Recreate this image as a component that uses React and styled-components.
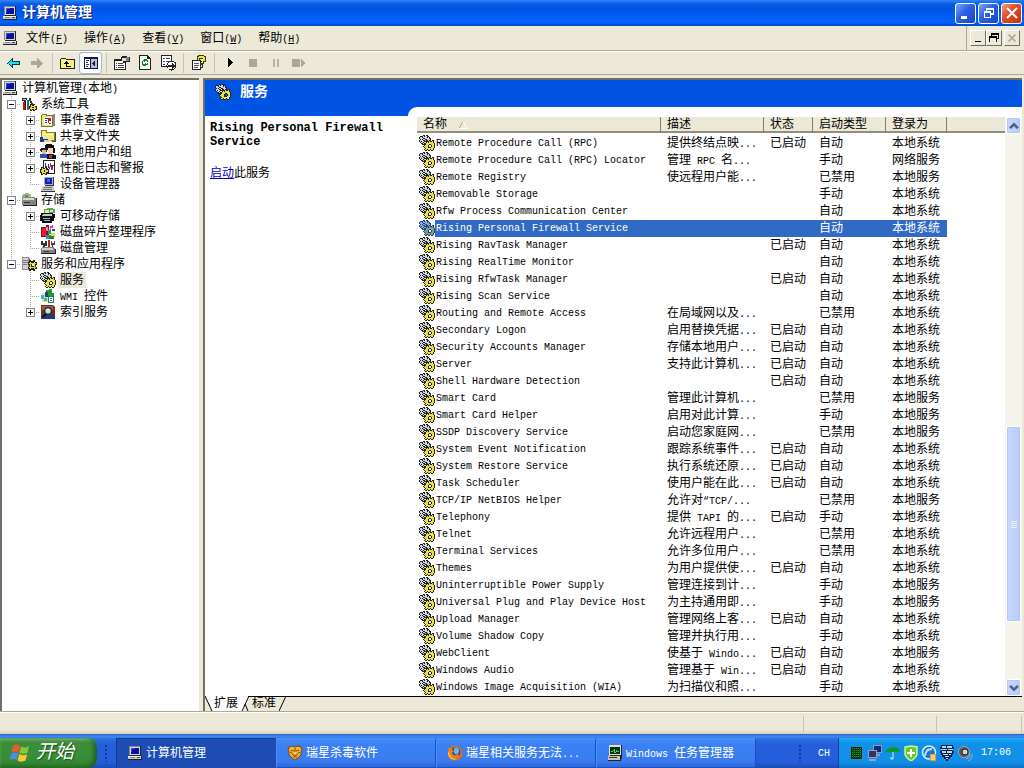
import React, { useState } from 'react';
import styled, { createGlobalStyle, css } from 'styled-components';

const AUTO = '自动';
const MANUAL = '手动';
const DISABLED = '已禁用';
const STARTED = '已启动';
const SYSTEM = '本地系统';
const LOCAL = '本地服务';
const NETWORK = '网络服务';

// name, description, status, startup type, log on as
const services = [
  ['Remote Procedure Call (RPC)', '提供终结点映...', STARTED, AUTO, SYSTEM],
  ['Remote Procedure Call (RPC) Locator', '管理 RPC 名...', '', MANUAL, NETWORK],
  ['Remote Registry', '使远程用户能...', '', DISABLED, LOCAL],
  ['Removable Storage', '', '', MANUAL, SYSTEM],
  ['Rfw Process Communication Center', '', '', AUTO, SYSTEM],
  ['Rising Personal Firewall Service', '', '', AUTO, SYSTEM],
  ['Rising RavTask Manager', '', STARTED, AUTO, SYSTEM],
  ['Rising RealTime Monitor', '', '', AUTO, SYSTEM],
  ['Rising RfwTask Manager', '', STARTED, AUTO, SYSTEM],
  ['Rising Scan Service', '', '', AUTO, SYSTEM],
  ['Routing and Remote Access', '在局域网以及...', '', DISABLED, SYSTEM],
  ['Secondary Logon', '启用替换凭据...', STARTED, AUTO, SYSTEM],
  ['Security Accounts Manager', '存储本地用户...', STARTED, AUTO, SYSTEM],
  ['Server', '支持此计算机...', STARTED, AUTO, SYSTEM],
  ['Shell Hardware Detection', '', STARTED, AUTO, SYSTEM],
  ['Smart Card', '管理此计算机...', '', DISABLED, LOCAL],
  ['Smart Card Helper', '启用对此计算...', '', MANUAL, LOCAL],
  ['SSDP Discovery Service', '启动您家庭网...', '', DISABLED, LOCAL],
  ['System Event Notification', '跟踪系统事件...', STARTED, AUTO, SYSTEM],
  ['System Restore Service', '执行系统还原...', STARTED, AUTO, SYSTEM],
  ['Task Scheduler', '使用户能在此...', STARTED, AUTO, SYSTEM],
  ['TCP/IP NetBIOS Helper', '允许对“TCP/...', '', DISABLED, LOCAL],
  ['Telephony', '提供 TAPI 的...', STARTED, MANUAL, SYSTEM],
  ['Telnet', '允许远程用户...', '', DISABLED, SYSTEM],
  ['Terminal Services', '允许多位用户...', '', DISABLED, SYSTEM],
  ['Themes', '为用户提供使...', STARTED, AUTO, SYSTEM],
  ['Uninterruptible Power Supply', '管理连接到计...', '', MANUAL, LOCAL],
  ['Universal Plug and Play Device Host', '为主持通用即...', '', MANUAL, LOCAL],
  ['Upload Manager', '管理网络上客...', STARTED, AUTO, SYSTEM],
  ['Volume Shadow Copy', '管理并执行用...', '', MANUAL, SYSTEM],
  ['WebClient', '使基于 Windo...', STARTED, AUTO, LOCAL],
  ['Windows Audio', '管理基于 Win...', STARTED, AUTO, SYSTEM],
  ['Windows Image Acquisition (WIA)', '为扫描仪和照...', '', MANUAL, SYSTEM],
];

// Latin runs are set smaller so that they take half the width of a Chinese character
function Txt({ children }) {
  return children
    .split(/([^\u2E80-\uFFEF]+)/)
    .filter(Boolean)
    .map((part, i) => (/[\u2E80-\uFFEF]/.test(part) ? part : <Latin key={i}>{part}</Latin>));
}

/* ---------- icons ---------- */

function Icon({ children, size = 16, crisp = true }) {
  return (
    <IconSvg width={size} height={size} viewBox="0 0 16 16" shapeRendering={crisp ? 'crispEdges' : 'auto'} aria-hidden="true">
      {children}
    </IconSvg>
  );
}

const gearPixels = [
  '....KK.KK.......',
  '.KKKWKWWKK......',
  'KWWKWWWWKWK.....',
  'KWWWKKWWWWKK....',
  '.KWKWWKKWWWK....',
  'KWWWKKWKKWKK.KK.',
  'KWKWWKKKKKYKKYK.',
  '.KWWKWWKYKYYYYK.',
  '..KKWKKYYYYYYYYK',
  '...KKKKYYYKKYYYK',
  '.....KYYYK..KYYK',
  '....KYYYYK..KYYK',
  '.....KYYYKKKYYYK',
  '......KYYYYYYYK.',
  '.....KYYKYYKYYK.',
  '......KK.KK.KK..',
];

// one path per colour letter of the pixel map
const pixelPath = (rows, letter) => rows
  .flatMap((row, y) => [...row].map((c, x) => (c === letter ? `M${x} ${y}h1v1h-1z` : '')))
  .join('');

const gearPaths = ['K', 'W', 'Y'].map((letter) => pixelPath(gearPixels, letter));

function Gears({ dim }) {
  const colors = dim ? ['#20447c', '#8cacdc', '#7c9c84'] : ['#24241c', '#ccd6e4', '#ece044'];
  return (
    <Icon>
      {gearPaths.map((d, i) => <path key={i} d={d} fill={colors[i]} />)}
    </Icon>
  );
}

function Computer() {
  return (
    <Icon>
      <path d="M2 1h11v9H2z" fill="#d8d8d0" />
      <path d="M2 1h11v1H2zM2 1h1v9H2z" fill="#888" />
      <path d="M13 1h1v10H3v-1h10z" fill="#222" />
      <path d="M4 3h8v6H4z" fill="#0810a8" />
      <path d="M4 3h4v1H4zM4 4h1v3H4z" fill="#3050e8" />
      <path d="M1 11h13v3H1z" fill="#c8c8c0" />
      <path d="M1 11h13v1H1z" fill="#f4f4f0" />
      <path d="M14 11h1v4H1v-1h13z" fill="#222" />
      <path d="M3 12h5v1H3z" fill="#888" />
      <path d="M10 12h3v1h-3z" fill="#444" />
    </Icon>
  );
}

function Tools() {
  return (
    <Icon>
      <path d="M1 2h5v2H5v2H3V5H1z" fill="#222" />
      <path d="M2 3h3v1H2z" fill="#dcdcdc" />
      <path d="M2 6h3v8H2z" fill="#c01818" />
      <path d="M4 6h1v8H4z" fill="#600" />
      <path d="M6 4h2v10H6z" fill="#1c7a70" />
      <path d="M8 2h2v3h1v2h1v2h1v2h-2V9h-1V7H9V5H8z" fill="#333" />
      <path d="M9 8h2v1h1V8h2v2h2v4h-2v1h-2v-1h-1v1H9v-2H8v-3h1z" fill="#222" />
      <path d="M10 9h1v1h2V9h1v2h1v2h-1v1h-1v-1h-2v1h-1v-1H9v-2h1z" fill="#e8d830" />
      <path d="M11 11h2v1h-2z" fill="#222" />
    </Icon>
  );
}

function EventLog() {
  return (
    <Icon>
      <path d="M1 3h1V2h5v1h6v12H1z" fill="#7c7428" />
      <path d="M2 3h4v1h6v10H2z" fill="#f2e66c" />
      <path d="M13 2h2v12h-2z" fill="#888" />
      <path d="M4 5h8v8H4z" fill="#fff" />
      <path d="M5 6h3v1H5zM5 8h2v1H5zM5 10h2v1H5z" fill="#2030b0" />
      <path d="M8 6h3v3H9v2H8zM9 11h2v1H9z" fill="#b02020" />
    </Icon>
  );
}

function SharedFolder() {
  return (
    <Icon>
      <path d="M1 2h6v2h8v9H1z" fill="#8a8020" />
      <path d="M2 3h4v2h8v7H2z" fill="#f4ea78" />
      <path d="M2 6h11v1H2z" fill="#fffbc8" />
      <path d="M0 9h3v2h5v1h3v2H0z" fill="#1838a8" />
      <path d="M4 12h7v2H4z" fill="#e8c8a8" />
      <path d="M15 4h1v10h-4v-1h3z" fill="#444" />
    </Icon>
  );
}

function Users() {
  return (
    <Icon>
      <path d="M6 0h6v1h2v3h1v5h-2V4H9v2H6V4H5V1h1z" fill="#111" />
      <path d="M8 4h5v5h-1v1H9V9H8z" fill="#f4d4c0" />
      <path d="M1 4h5v1h1v3H1V7H0V5h1z" fill="#222" />
      <path d="M2 6h4v4H2z" fill="#e8b898" />
      <path d="M0 10h7v4H0z" fill="#2850b8" />
      <path d="M7 10h7v1h2v4H7z" fill="#111" />
      <path d="M9 11h3v3H9z" fill="#c83030" />
    </Icon>
  );
}

function PerfLog() {
  return (
    <Icon>
      <path d="M3 0h12v14H3z" fill="#222" />
      <path d="M4 1h10v12H4z" fill="#fff" />
      <path d="M5 3h1v3h1v2h1V4h1v3h1V3h1v4h1V5h2v1h-1v3h-2V6h-1v3H9V8H8v2H6V7H5z" fill="#2030c0" />
      <path d="M10 3h1v2h1v3h1v2h-2V7h-1z" fill="#d02020" />
      <path d="M1 7h2v1h2V7h2v2h2v4H7v2H5v-1H3v1H1v-2H0V9h1z" fill="#222" />
      <path d="M2 8h1v1h2V8h1v2h2v2H6v2H5v-1H3v1H2v-2H1v-2h1z" fill="#e8dc30" />
      <path d="M4 10h1v2H4z" fill="#222" />
    </Icon>
  );
}

function DeviceManager() {
  return (
    <Icon>
      <path d="M4 1h9v8H4z" fill="#b0b0b8" />
      <path d="M5 2h7v6H5z" fill="#1020b8" />
      <path d="M7 3h3v3H7z" fill="#4060f0" />
      <path d="M13 1h1v9H5V9h8z" fill="#333" />
      <path d="M3 10h10v1h1v2h1v2H1v-2h1v-2h1z" fill="#c8c8d0" />
      <path d="M4 11h8v1H4zM3 13h9v1H3z" fill="#70707c" />
      <path d="M1 15h14v1H1z" fill="#333" />
    </Icon>
  );
}

function Storage() {
  return (
    <Icon>
      <path d="M2 2h2V1h4v1h2v4H1V3h1z" fill="#88c880" />
      <path d="M4 3h3v2H4z" fill="#c05858" />
      <path d="M1 5h12l2 2v6H1z" fill="#888" />
      <path d="M2 6h11v2H2z" fill="#d8d8d8" />
      <path d="M15 6h1v8H2v-1h13z" fill="#222" />
      <path d="M3 10h6v1H3z" fill="#333" />
      <path d="M11 10h2v1h-2z" fill="#20a020" />
    </Icon>
  );
}

function Removable() {
  return (
    <Icon>
      <path d="M4 1h3V0h6v1h2v4H4z" fill="#50a858" />
      <path d="M5 2h4v3H5z" fill="#e8e8a0" />
      <path d="M10 2h3v2h-3z" fill="#d0e8d0" />
      <path d="M1 5h12v1h2v4h-1v3h-2v2H2v-2H0V7h1z" fill="#111" />
      <path d="M3 6h9v2H2V7h1z" fill="#c8c8c8" />
      <path d="M3 10h7v1H3zM4 12h6v1H4z" fill="#90b8c8" />
    </Icon>
  );
}

function Defrag() {
  return (
    <Icon>
      <path d="M1 3h5V1h3v13H6v-1H1z" fill="#901020" />
      <path d="M2 4h4v8H2z" fill="#e02030" />
      <path d="M6 3h2v4H6z" fill="#f090a0" />
      <path d="M10 2h2V1h1v3h-2v2h-1z" fill="#c040c0" />
      <path d="M12 5h3v2h-3z" fill="#3040e0" />
      <path d="M8 6h3v4H8z" fill="#20a838" />
      <path d="M11 9h4v4h-4z" fill="#e8d828" />
      <path d="M6 11h5v4H6z" fill="#2090d0" />
      <path d="M9 12h5v3H9z" fill="#208030" />
    </Icon>
  );
}

function DiskManage() {
  return (
    <Icon>
      <path d="M1 1h2v2h2V1h2v5H5v2H3V5H1z" fill="#333" />
      <path d="M8 0h2v7H8z" fill="#b02828" />
      <path d="M11 1h1v2h2V1h1v4h-2v3h-1V5h-1z" fill="#444" />
      <path d="M2 7h12l1 2v4H1V9z" fill="#808080" />
      <path d="M2 8h11v2H2z" fill="#d0d0d0" />
      <path d="M1 13h14v1H1zM15 9h1v5h-1z" fill="#222" />
      <path d="M4 11h5v1H4z" fill="#444" />
    </Icon>
  );
}

function ServicesApps() {
  return (
    <Icon>
      <path d="M1 1h6l2 1v12H1z" fill="#909090" />
      <path d="M2 2h5v11H2z" fill="#d0d0d0" />
      <path d="M2 4h5v1H2zM2 6h5v1H2zM2 8h4v1H2z" fill="#777" />
      <path d="M8 4h2v1h2V4h2v2h2v3h-1v2h1v2h-2v2h-2v-1h-2v1H8v-2H7v-2h1V9H7V6h1z" fill="#222" />
      <path d="M9 6h1v1h3V6h1v1h1v1h-1v3h1v1h-1v1h-1v-1h-3v1H9v-1H8v-1h1V8H8V7h1z" fill="#e6da30" />
      <path d="M10 8h3v3h-3z" fill="#222" />
      <path d="M11 8h2v2h-2z" fill="#fff" />
    </Icon>
  );
}

function Wmi() {
  return (
    <Icon>
      <path d="M2 5h6v9H2z" fill="#f0e860" />
      <path d="M6 2h3V1h3v4h2v3H8V6H6z" fill="#209838" />
      <path d="M1 7h3v3h3v3H4v-2H1z" fill="#28b8d8" />
      <path d="M5 4h3v5H5z" fill="#2038b8" />
      <path d="M8 8h6v7H8z" fill="#207868" />
      <path d="M9 9h4v5H9z" fill="#f8f8f8" />
      <path d="M10 10h2v1h-2zM10 12h2v1h-2z" fill="#207868" />
    </Icon>
  );
}

function Indexing() {
  return (
    <Icon crisp={false}>
      <path d="M1 1h12l2 2v11H1z" fill="#703020" />
      <path d="M2 2h11v4H2z" fill="#a85838" />
      <path d="M1 12h14v3H1z" fill="#1838a0" />
      <circle cx="8" cy="7" r="3.4" fill="#a8e4ec" stroke="#222" strokeWidth="1.2" />
      <path d="M6 10 2.5 13" stroke="#111" strokeWidth="2" />
      <path d="M7 6h2" stroke="#fff" />
    </Icon>
  );
}

function Shield() {
  return (
    <Icon crisp={false}>
      <path d="M2 2l3-1 3 1 3-1 3 1 1 3-1 2v3l-3 3-3 2-3-2-3-3V7L1 5z" fill="#f0b030" stroke="#7a4408" />
      <path d="M4 5l3 1M12 5L9 6M5 9l3 2 3-2M6 12h4M8 3v4M3 7l2 1M13 7l-2 1" stroke="#8a4c00" fill="none" />
      <path d="M5 4h1M10 4h1M7 8h2" stroke="#fff4a0" />
    </Icon>
  );
}

function Firefox() {
  return (
    <Icon crisp={false}>
      <circle cx="8" cy="8" r="7.500" fill="#e86c10" />
      <circle cx="8.500" cy="7" r="5" fill="#26489c" />
      <path d="M7 3c3-2 6 1 5 4s-4 3-5 1z" fill="#68b4e4" />
      <path d="M1 2l2 2 3-1-1 2 2 1-2 2c1 3 4 3 6 1l1 2c-3 3-8 2-9-1z" fill="#f08018" />
      <path d="M2 6c0 5 3 8 8 8-4 2-9-1-9-6z" fill="#fcc838" />
    </Icon>
  );
}

function TaskManager() {
  return (
    <Icon>
      <path d="M2 0h12v11H2z" fill="#e4e0d0" />
      <path d="M14 0h1v11H3v-1h11z" fill="#222" />
      <path d="M3 2h10v7H3z" fill="#063010" />
      <path d="M4 6h2V5h1V4h1v3h1V5h1v1h2v1H9v1H7V6H6v1H4z" fill="#30e050" />
      <path d="M1 11h12v4H1z" fill="#c8c4b4" />
      <path d="M2 12h8v1H2z" fill="#333" />
      <path d="M13 11h2v3h-1v2H1v-1h12z" fill="#222" />
    </Icon>
  );
}

function WindowsFlag() {
  return (
    <IconSvg width="20" height="20" viewBox="0 0 20 20" aria-hidden="true">
      <path d="M3 3c2-2 5-2 7 0L8.500 9.500c-2-1.500-5-1.500-7 0z" fill="#f0582c" />
      <path d="M11 3.500c2 1.500 5 1.500 8-.5L17.500 9.500c-3 1.500-6 1.500-8 .3z" fill="#8cc63c" />
      <path d="M1.200 10.700c2-1.500 5-1.500 7 0L6.500 17c-2-1.500-5-1.500-7 0z" fill="#4a8ef0" />
      <path d="M9.200 11c2 1.500 5 1.500 8 .2L15.500 17.500c-3 1.500-6 1.500-8 0z" fill="#fcc830" />
    </IconSvg>
  );
}

const toolbar = [
  { label: '后退', icon: <><path d="M1 8h1V7h1V6h1V5h1V4h1V3h1v3h7v4H7v3H6v-1H5v-1H4v-1H3V9H1z" fill="#003c50" /><path d="M2 8h1V7h1V6h1V5h1v2h7v2H6v2H5v-1H4V9H2z" fill="#20e0e8" /></> },
  { label: '前进', off: true, icon: <path d="M2 6h6V3l1 1 5 4-5 5H8v-3H2z" fill="#aca899" /> },
  null,
  { label: '上一级', icon: <><path d="M1 3h5v1h9v10H0V4h1z" fill="#222" /><path d="M1 4h5v1h8v8H1z" fill="#f8f080" /><path d="M6 6h1v1h1v1h1v1H7v2h4v1H6V9H4V8h1V7h1z" fill="#000" /></> },
  { label: '显示/隐藏控制台树', pressed: true, icon: <><path d="M1 2h14v12H1z" fill="#101840" /><path d="M2 4h5v9H2zM8 4h6v9H8z" fill="#fff" /><path d="M8 4h6v9H8z" fill="#b8bcd0" /><path d="M3 5h3v1H3zM3 7h2v1H3zM3 9h3v1H3zM3 11h2v1H3z" fill="#203080" /><path d="M12 6v5h-1v-1h-1V9H9V8h1V7h1V6z" fill="#101840" /></> },
  null,
  { label: '属性', icon: <><path d="M0 4h12v11H0z" fill="#222" /><path d="M1 6h10v8H1z" fill="#fff" /><path d="M2 8h1v1H2zM4 8h5v1H4zM2 10h1v1H2zM4 10h6v1H4zM2 12h1v1H2zM4 12h6v1H4z" fill="#444" /><path d="M8 1h5v1h3v5h-4v1H9V6H6V4h1V2h1z" fill="#222" /><path d="M8 3h4v3H8z" fill="#e8dcc8" /><path d="M12 2h3v4h-3z" fill="#7880b8" /></> },
  { label: '刷新', icon: <><path d="M2 0h9v1h1v1h1v1h1v12H2z" fill="#222" /><path d="M3 1h7v3h3v10H3z" fill="#fff" /><path d="M8 3v1h2v1h1v2h-1V6H8v1H7V6H6V5h1V4h1zM5 6h1v2H5z" fill="#108020" /><path d="M8 12v-1H6v-1H5V8h1v1h2V8h1v1h1v1H9v1H8zM11 8h-1v2h1z" fill="#108020" /></> },
  { label: '导出列表', icon: <><path d="M1 0h11v12H1z" fill="#222" /><path d="M2 1h9v10H2z" fill="#fff" /><path d="M3 3h2v1H3zM6 3h4v1H6zM3 6h2v1H3zM6 6h3v1H6zM3 9h2v1H3z" fill="#304070" /><circle cx="11.500" cy="10.500" r="4.500" fill="#fff" stroke="#222" /><path d="M8 10h4V8l3 3-3 3v-2H8z" fill="#222" /></> },
  null,
  { label: '帮助', icon: <><path d="M1 5h9v10H1z" fill="#222" /><path d="M2 6h7v8H2z" fill="#fff" /><path d="M3 8h5v1H3zM3 10h5v1H3zM3 12h4v1H3z" fill="#555" /><path d="M6 1h1V0h6v1h2v6h-2v2h-1v4H9V8h1V6h2V4H9v2H6z" fill="#333" /><path d="M7 2h1V1h5v1h1v4h-2v2h-2V7h1V5h1V3H8v2H7zM10 10h1v2h-1z" fill="#f8e820" /></> },
  null,
  { label: '启动服务', icon: <path d="M6 3h1v1h1v1h1v1h1v1h1v1h-1v1H9v1H8v1H7v1H6z" fill="#000" /> },
  { label: '停止服务', off: true, icon: <path d="M4 4h8v8H4z" fill="#aca899" /> },
  { label: '暂停服务', off: true, icon: <path d="M5 4h2v8H5zM9 4h2v8H9z" fill="#b8b4a4" /> },
  { label: '重新启动服务', off: true, icon: <path d="M1 4h8v8H1zM10 4l5 4-5 4z" fill="#aca899" /> },
];

const menus = [['文件', 'F'], ['操作', 'A'], ['查看', 'V'], ['窗口', 'W'], ['帮助', 'H']];

// guides: 'line' keeps a parent line running, 'tee' and 'end' are branches of the node itself
const tree = [
  { icon: <Computer />, text: '计算机管理(本地)', guides: [] },
  { icon: <Tools />, text: '系统工具', guides: ['tee'], open: true },
  { icon: <EventLog />, text: '事件查看器', guides: ['line', 'tee'], open: false },
  { icon: <SharedFolder />, text: '共享文件夹', guides: ['line', 'tee'], open: false },
  { icon: <Users />, text: '本地用户和组', guides: ['line', 'tee'], open: false },
  { icon: <PerfLog />, text: '性能日志和警报', guides: ['line', 'tee'], open: false },
  { icon: <DeviceManager />, text: '设备管理器', guides: ['line', 'end'] },
  { icon: <Storage />, text: '存储', guides: ['tee'], open: true },
  { icon: <Removable />, text: '可移动存储', guides: ['line', 'tee'], open: false },
  { icon: <Defrag />, text: '磁盘碎片整理程序', guides: ['line', 'tee'] },
  { icon: <DiskManage />, text: '磁盘管理', guides: ['line', 'end'] },
  { icon: <ServicesApps />, text: '服务和应用程序', guides: ['end'], open: true },
  { icon: <Gears />, text: '服务', guides: ['none', 'tee'], active: true },
  { icon: <Wmi />, text: 'WMI 控件', guides: ['none', 'tee'] },
  { icon: <Indexing />, text: '索引服务', guides: ['none', 'end'], open: false },
];

const tasks = [
  { icon: <Computer />, text: '计算机管理', active: true },
  { icon: <Shield />, text: '瑞星杀毒软件' },
  { icon: <Firefox />, text: '瑞星相关服务无法...' },
  { icon: <TaskManager />, text: 'Windows 任务管理器' },
];

function Tray() {
  return (
    <TrayBar>
      <Icon>
        <path d="M2 2h11v12H2z" fill="#042808" />
        <path d="M3 3h9v1H3zM3 5h9v1H3zM3 7h9v1H3zM3 9h9v1H3zM3 11h9v1H3z" fill="#189820" />
        <path d="M4 3h1v10H4zM6 3h1v10H6zM8 3h1v10H8zM10 3h1v10h-1z" fill="#085010" />
      </Icon>
      <Icon>
        <path d="M6 0h9v8H6zM8 9h5v2H8z" fill="#9098bc" />
        <path d="M7 1h7v6H7z" fill="#182878" />
        <path d="M1 5h9v8H1zM2 14h7v2H2z" fill="#9ca0c0" />
        <path d="M2 6h7v6H2z" fill="#303468" />
      </Icon>
      <Icon crisp={false}>
        <path d="M0 8c1-4 4-5 8-6 4 0 7 2 8 6-1-2-3-2-4 0-1-2-3-2-4 0-1-2-3-2-4 0-1-2-3-1-4 0z" fill="#0c9828" />
        <path d="M8 7v7H6v-2" stroke="#e0f0d8" fill="none" />
      </Icon>
      <Icon crisp={false}>
        <path d="M2 2l6-1 6 1v7c0 3-3 5-6 7-3-2-6-4-6-7z" fill="#68c838" stroke="#d4f098" strokeWidth="1.500" />
        <path d="M7 4h2v3h3v2H9v3H7V9H4V7h3z" fill="#fff" />
      </Icon>
      <Icon crisp={false}>
        <circle cx="8" cy="7.500" r="6.500" fill="#1878d0" stroke="#d8f0fc" strokeWidth="1.500" />
        <path d="M4 11c0-4 3-7 7-7M5 6l3-2" stroke="#a8e0ff" strokeWidth="2" fill="none" />
        <path d="M9 9h6v7H9z" fill="#f09820" />
        <path d="M11 10v5M13 10v5" stroke="#fff" />
      </Icon>
      <Icon>
        <path d="M2 0h12v2h1v2h-1v2h1v2h-1v2h-1v2h-2v2H9v2H7v-2H5v-2H3v-2H2V8H1V6h1V4H1V2h1z" fill="#101c50" />
        <path d="M3 1h4v2H3zM8 1h5v2H8zM2 4h6v1H2zM9 4h5v1H9zM3 6h4v2H3zM8 6h5v2H8zM4 9h5v1H4zM10 9h2v1h-2zM6 11h4v1H6zM7 13h2v1H7z" fill="#a8e0f0" />
      </Icon>
      <Icon crisp={false}>
        <circle cx="7" cy="7" r="5.500" fill="#50545c" stroke="#a0a4ac" />
        <circle cx="8" cy="7" r="3" fill="#d0d4d8" stroke="#222" />
        <path d="M13 9q1 3-4 5M15 9q1 5-4 7" stroke="#a8acbc" fill="none" />
      </Icon>
      <Clock>17:06</Clock>
    </TrayBar>
  );
}

function RestoreGlyph({ color }) {
  return (
    <Icon>
      <path d="M5 3h8v7h-3V8h2V5H6v1H5zM3 6h7v7H3zM4 8v4h5V8z" fillRule="evenodd" fill={color} />
    </Icon>
  );
}

function App() {
  const [selected, setSelected] = useState(5);

  return (
    <Desktop>
      <GlobalStyle />

      {/* Title bar */}
      <TitleBar>
        <Computer />
        <Title>计算机管理</Title>
        <CaptionButton aria-label="最小化">
          <Icon><path d="M3 11h6v3H3z" fill="#fff" /></Icon>
        </CaptionButton>
        <CaptionButton aria-label="还原">
          <RestoreGlyph color="#fff" />
        </CaptionButton>
        <CaptionButton $close aria-label="关闭">
          <Icon crisp={false}><path d="M3 3l10 10M13 3L3 13" stroke="#fff" strokeWidth="2" /></Icon>
        </CaptionButton>
      </TitleBar>

      {/* Menu */}
      <MenuBar>
        <Computer />
        <Menus>
          {menus.map(([text, key]) => (
            <MenuButton key={key}>{text}<Latin>(<u>{key}</u>)</Latin></MenuButton>
          ))}
        </Menus>
        <ChildButtons>
          <ChildButton aria-label="最小化子窗口">
            <Icon size={14}><path d="M4 11h7v2H4z" fill="#000" /></Icon>
          </ChildButton>
          <ChildButton aria-label="还原子窗口">
            <Icon size={14}><path d="M5 2h9v7h-3V8h2V5H6v1H5zM2 6h9v7H2zM3 8v4h7V8z" fillRule="evenodd" fill="#000" /></Icon>
          </ChildButton>
          <ChildButton $apart disabled aria-label="关闭子窗口">
            <Icon size={14} crisp={false}><path d="M4 4l8 8M12 4l-8 8" stroke="#aca899" strokeWidth="2" /></Icon>
          </ChildButton>
        </ChildButtons>
      </MenuBar>

      <ToolBar>
        {toolbar.map((item, i) => item
          ? <ToolButton key={i} $pressed={item.pressed} disabled={item.off} aria-label={item.label}><Icon>{item.icon}</Icon></ToolButton>
          : <Separator key={i} />)}
      </ToolBar>

      <Content>
        {/* Console tree */}
        <TreePane>
          {tree.map((node) => (
            <TreeRow key={node.text}>
              {node.guides.map((kind, i) => (
                <Guide key={i} $kind={kind}>
                  {i === node.guides.length - 1 && node.open !== undefined && (
                    <Toggle $open={node.open} aria-expanded={node.open} aria-label={node.text} />
                  )}
                </Guide>
              ))}
              {node.icon}
              <TreeLabel $active={node.active}><Txt>{node.text}</Txt></TreeLabel>
            </TreeRow>
          ))}
        </TreePane>

        <DetailPane>
          <Banner>
            <SideColumn>
              <BannerTitle><Gears />服务</BannerTitle>
              <Description>
                <ServiceName>{services[selected][0]}</ServiceName>
                <p><a href="#start">启动</a>此服务</p>
              </Description>
            </SideColumn>

            <ListColumn>
              <ListArea>
                <Table>
                  <colgroup>
                    <Col $w={244} />
                    <Col $w={103} />
                    <Col $w={49} />
                    <Col $w={73} />
                    <Col $w={61} />
                    <col />
                  </colgroup>
                  <thead>
                    <tr>
                      <Th><HeadCell>名称<SortArrow width="8" height="8" viewBox="0 0 8 8"><path d="M0 7.500L4 .5" stroke="#aca899" /><path d="M4 .5L8 7.500H0" stroke="#fff" fill="none" /></SortArrow></HeadCell></Th>
                      <Th><HeadCell>描述</HeadCell></Th>
                      <Th><HeadCell>状态</HeadCell></Th>
                      <Th><HeadCell>启动类型</HeadCell></Th>
                      <Th><HeadCell>登录为</HeadCell></Th>
                      <Th><HeadCell $last /></Th>
                    </tr>
                  </thead>
                  <tbody>
                    {services.map(([name, ...rest], i) => (
                      <Row key={name} $selected={i === selected} onClick={() => setSelected(i)}>
                        <NameCell>
                          <NameBox>
                            <Gears dim={i === selected} />
                            <NameLabel><Txt>{name}</Txt></NameLabel>
                          </NameBox>
                        </NameCell>
                        {rest.map((value, j) => <Cell key={j}><Txt>{value}</Txt></Cell>)}
                        <td />
                      </Row>
                    ))}
                  </tbody>
                </Table>
              </ListArea>
              <ScrollBar>
                <ScrollButton aria-label="向上滚动">
                  <Icon size={14} crisp={false}><path d="M3.500 10.500L8 6l4.500 4.500" stroke="#4d6185" strokeWidth="3" fill="none" /></Icon>
                </ScrollButton>
                <Gap $grow={292} />
                <Thumb><i /><i /><i /><i /></Thumb>
                <Gap $grow={57} />
                <ScrollButton aria-label="向下滚动">
                  <Icon size={14} crisp={false}><path d="M3.500 5.500L8 10l4.500-4.500" stroke="#4d6185" strokeWidth="3" fill="none" /></Icon>
                </ScrollButton>
              </ScrollBar>
            </ListColumn>
          </Banner>

          <Tabs>
            <TabEdge width="9" height="15"><path d="M0 0h9v15H7z" fill="#fff" /><path d="M0 0l7 15" stroke="#000" /></TabEdge>
            <Tab $active>扩展</Tab>
            <TabEdge width="11" height="15"><path d="M0 0h9L2 15H0z" fill="#fff" /><path d="M8 0L1 15M4 8l3 7M7 .5h4" stroke="#000" fill="none" /></TabEdge>
            <Tab>标准</Tab>
            <TabEdge width="9" height="15"><path d="M7 0L0 15M0 .5h9" stroke="#000" /></TabEdge>
            <TabRest />
          </Tabs>
        </DetailPane>
      </Content>

      <StatusBar>
        <StatusCell />
        <StatusCell $w={133} />
        <StatusCell $w={85} />
      </StatusBar>

      {/* Taskbar */}
      <TaskBar>
        <StartButton><WindowsFlag />开始</StartButton>
        <Grip />
        <TaskList>
          {tasks.map((task) => (
            <TaskButton key={task.text} $active={task.active}>{task.icon}<TaskLabel><Txt>{task.text}</Txt></TaskLabel></TaskButton>
          ))}
        </TaskList>
        <Grip />
        <LanguageButton><Latin>CH</Latin></LanguageButton>
        <Tray />
      </TaskBar>
    </Desktop>
  );
}

const GlobalStyle = createGlobalStyle`
  * {
    box-sizing: border-box;
  }

  body {
    margin: 0;
    overflow: hidden;
    background: #ece9d8;
  }

  body, button {
    font-family: "Liberation Mono", "Noto Sans CJK SC", monospace;
    font-size: 12px;
    line-height: 16px;
    color: #000;
  }

  button {
    margin: 0;
    padding: 0;
    border: 0;
    background: none;
  }

  p {
    margin: 0;
  }
`;

const Latin = styled.span`
  font-size: 10px;
`;

const IconSvg = styled.svg`
  display: block;
  flex: none;
`;

const Desktop = styled.div`
  display: flex;
  flex-direction: column;
  height: 100vh;
`;

const TitleBar = styled.header`
  display: flex;
  align-items: center;
  gap: 2px;
  height: 26px;
  padding: 0 2px;
  background: linear-gradient(#2a86f8 0, #0a5ae8 4px, #0054e3 10px, #0060f8 18px, #0064ff 22px, #0048c8 26px);
`;

const Title = styled.h1`
  flex: 1;
  margin: 0 2px;
  font-size: 14px;
  font-weight: bold;
  line-height: 20px;
  color: #fff;
  text-shadow: 1px 1px #0a1883;
`;

const CaptionButton = styled.button`
  display: flex;
  align-items: center;
  justify-content: center;
  width: 21px;
  height: 21px;
  border: 1px solid #fff;
  border-radius: 3px;
  background: ${(p) => (p.$close
    ? 'linear-gradient(135deg, #f0a088, #e0502c 40%, #c43008)'
    : 'linear-gradient(135deg, #7ca4f8, #2c60e4 45%, #1844c8)')};
`;

const MenuBar = styled.nav`
  display: flex;
  align-items: center;
  height: 25px;
  padding-left: 2px;
  border-bottom: 1px solid #aca899;
`;

const Menus = styled.div`
  display: flex;
  flex: 1;
`;

const MenuButton = styled.button`
  padding: 2px 8px 0;
  white-space: nowrap;
`;

const ChildButtons = styled.div`
  display: flex;
  align-items: center;
  align-self: stretch;
  padding: 0 4px 0 3px;
  border-left: 1px solid #aca899;
`;

const ChildButton = styled.button`
  width: 16px;
  height: 16px;
  margin-left: ${(p) => (p.$apart ? 2 : 0)}px;
  border: 1px solid;
  border-color: #fff #716f64 #716f64 #fff;
`;

const ToolBar = styled.div`
  display: flex;
  align-items: center;
  height: 24px;
  padding-left: 2px;
  border-top: 1px solid #fff;
  border-bottom: 1px solid #aca899;
`;

const ToolButton = styled.button`
  display: flex;
  align-items: center;
  justify-content: center;
  width: 23px;
  height: 22px;
  border: 1px solid transparent;

  ${(p) => p.$pressed && css`
    border-color: #98b5e2;
    border-radius: 3px;
    background: #fff;
  `}
`;

const Separator = styled.span`
  width: 1px;
  height: 20px;
  margin: 0 3px 0 4px;
  background: #c5c2b0;
`;

const Content = styled.main`
  display: flex;
  flex: 1;
  gap: 4px;
  min-height: 0;
  padding: 3px 2px 0 0;
  border-bottom: 1px solid #aca899;
`;

const TreePane = styled.aside`
  flex: none;
  width: 199px;
  border: solid #716f64;
  border-width: 2px 0 0 2px;
  background: #fff;
`;

const TreeRow = styled.div`
  display: flex;
  align-items: center;
  height: 16px;
  white-space: nowrap;
`;

const dots = (dir) => `repeating-linear-gradient(to ${dir}, #aca899 0 1px, transparent 1px 2px)`;

const Guide = styled.span`
  display: flex;
  align-items: center;
  justify-content: center;
  flex: none;
  width: 19px;
  height: 16px;
  background-repeat: no-repeat;
  background-position: 9px 0, 9px 8px;

  ${(p) => p.$kind !== 'none' && css`
    background-image: ${dots('bottom')}${p.$kind === 'line' ? '' : `, ${dots('right')}`};
    background-size: 1px ${p.$kind === 'end' ? 8 : 16}px, 10px 1px;
  `}
`;

const Toggle = styled.button`
  width: 9px;
  height: 9px;
  border: 1px solid #848284;
  background-color: #fff;
  background-image: linear-gradient(#000, #000), linear-gradient(#000, #000);
  background-position: center;
  background-repeat: no-repeat;
  background-size: 5px 1px, ${(p) => (p.$open ? '0 0' : '1px 5px')};
`;

const TreeLabel = styled.span`
  margin-left: 2px;
  padding: 2px 2px 0;
  line-height: 14px;
  background: ${(p) => (p.$active ? '#ece9d8' : 'none')};
`;

const DetailPane = styled.section`
  display: flex;
  flex: 1;
  flex-direction: column;
  min-width: 0;
  border: solid #716f64;
  border-width: 2px 0 0 2px;
`;

const Banner = styled.div`
  display: flex;
  flex: 1;
  min-height: 0;
  background: #0054e3;
`;

const SideColumn = styled.div`
  display: flex;
  flex: none;
  flex-direction: column;
  width: 203px;
`;

const BannerTitle = styled.h2`
  display: flex;
  align-items: center;
  gap: 9px;
  height: 36px;
  margin: 0;
  padding: 0 0 12px 10px;
  font-size: 14px;
  line-height: 20px;
  color: #fff;
`;

const Description = styled.div`
  flex: 1;
  padding: 5px 5px 0;
  line-height: 14px;
  background: #fff;

  a {
    color: #0000c8;
  }
`;

const ServiceName = styled.h3`
  margin: 0 0 18px;
  font-size: 12px;
  line-height: 14px;
`;

const ListColumn = styled.div`
  display: flex;
  flex: 1;
  min-width: 0;
  margin-top: 27px;
  padding: 10px 0 0 9px;
  border-top-left-radius: 9px;
  background: #fff;
`;

const ListArea = styled.div`
  flex: 1;
  min-width: 0;
  overflow: hidden;
`;

const Table = styled.table`
  width: 100%;
  table-layout: fixed;
  border-collapse: collapse;
`;

const Col = styled.col`
  width: ${(p) => p.$w}px;
`;

const Th = styled.th`
  padding: 0 0 2px;
  font-weight: normal;
  text-align: left;
`;

const HeadCell = styled.div`
  display: flex;
  align-items: center;
  height: 16px;
  padding: 2px 0 0 6px;
  border-right: ${(p) => (p.$last ? 0 : 1)}px solid #807d6c;
  border-bottom: 2px solid #928f80;
  background: #ece9d8;
  white-space: nowrap;
`;

const SortArrow = styled.svg`
  margin-left: 12px;
`;

const Cell = styled.td`
  height: 17px;
  padding: 2px 0 0 6px;
  line-height: 15px;
  white-space: nowrap;
`;

const NameCell = styled.td`
  padding: 0 0 0 2px;
  line-height: 17px;
  white-space: nowrap;
`;

const NameBox = styled.div`
  display: flex;
  height: 17px;
`;

const NameLabel = styled.span`
  flex: 1;
  padding-left: 1px;
`;

const Row = styled.tr`
  ${(p) => p.$selected && css`
    color: #fff;

    ${Cell}, ${NameLabel} {
      background: #316ac5;
    }
  `}
`;

const ScrollBar = styled.div`
  display: flex;
  flex: none;
  flex-direction: column;
  width: 17px;
  padding: 0 1px;
  background: #f4f3ec;
`;

const scrollPart = css`
  border: 1px solid #fff;
  border-radius: 2px;
  background: linear-gradient(to right, #c9d8fc, #b8cbf6);
  box-shadow: inset 0 0 0 1px #b4c8f0;
`;

const ScrollButton = styled.button`
  display: flex;
  align-items: center;
  justify-content: center;
  flex: none;
  height: 17px;
  ${scrollPart}
`;

const Gap = styled.div`
  flex: ${(p) => p.$grow};
`;

const Thumb = styled.div`
  display: flex;
  flex: 194;
  flex-direction: column;
  align-items: center;
  justify-content: center;
  gap: 1px;
  ${scrollPart}

  i {
    width: 6px;
    height: 1px;
    background: #eef4fe;
  }
`;

const Tabs = styled.div`
  display: flex;
  height: 15px;
`;

const TabEdge = styled.svg`
  flex: none;
`;

const Tab = styled.button`
  width: 27px;
  border-top: ${(p) => (p.$active ? 0 : 1)}px solid #000;
  background: ${(p) => (p.$active ? '#fff' : '#ece9d8')};
  line-height: 14px;
  text-align: left;
`;

const TabRest = styled.div`
  flex: 1;
  border-top: 1px solid #000;
`;

const StatusBar = styled.footer`
  display: flex;
  height: 22px;
  padding: 3px 2px 2px;
  border-top: 1px solid #fff;
  background: linear-gradient(#ece9d8 80%, #d8d4c0);
`;

const StatusCell = styled.div`
  flex: ${(p) => (p.$w ? `0 0 ${p.$w}px` : 1)};
  border-right: 1px solid #c5c2b0;
`;

const TaskBar = styled.div`
  display: flex;
  flex: none;
  height: 34px;
  padding-top: 4px;
  background: linear-gradient(#2458c0 0, #3f8cf0 2px, #2c70e0 5px, #245edb 10px, #245edb 28px, #1c4cb4 34px);
`;

const StartButton = styled.button`
  display: flex;
  align-items: center;
  gap: 6px;
  flex: none;
  width: 97px;
  padding-left: 10px;
  border-radius: 0 9px 9px 0;
  background: linear-gradient(#56a050 0, #3c8c3c 5px, #388e38 20px, #2e7c2e 30px);
  box-shadow: inset -3px -1px 4px #1f5e1f, inset 0 2px 2px #78b878;
  font-size: 19px;
  font-style: italic;
  line-height: 24px;
  color: #fff;
  text-shadow: 1px 1px 1px #1c4c1c;
`;

const Grip = styled.span`
  flex: none;
  width: 5px;
  margin: 6px 7px;
  background: radial-gradient(circle, #12389c 1px, transparent 1px) 0 0 / 4px 4px;
`;

const TaskList = styled.div`
  display: flex;
  flex: 1;
  min-width: 0;
`;

const TaskButton = styled.button`
  display: flex;
  align-items: center;
  gap: 3px;
  flex: 0 1 160px;
  min-width: 0;
  padding-left: 10px;
  border: 1px solid;
  border-color: #4a90f8 #1c50c0 #1c50c0 #4a90f8;
  background: linear-gradient(#4a8cf8, #3a80f4 6px, #3a7cf0 22px, #2c68dc);
  color: #fff;
  white-space: nowrap;
  overflow: hidden;

  ${(p) => p.$active && css`
    border-color: #143c90 #1c4cb0 #1c4cb0 #143c90;
    background: #1c4cb4;
  `}
`;

const TaskLabel = styled.span`
  padding-top: 2px;
`;

const LanguageButton = styled.button`
  width: 28px;
  color: #fff;
`;

const TrayBar = styled.div`
  display: flex;
  align-items: center;
  gap: 2px;
  padding: 0 13px 0 10px;
  border-left: 1px solid #1040a0;
  background: linear-gradient(#18b0f8 0, #1290e8 5px, #1290e8 24px, #0c70c8 30px);
  color: #fff;
`;

const Clock = styled.time`
  margin-left: 6px;
  font-size: 10px;
`;

export default App;
